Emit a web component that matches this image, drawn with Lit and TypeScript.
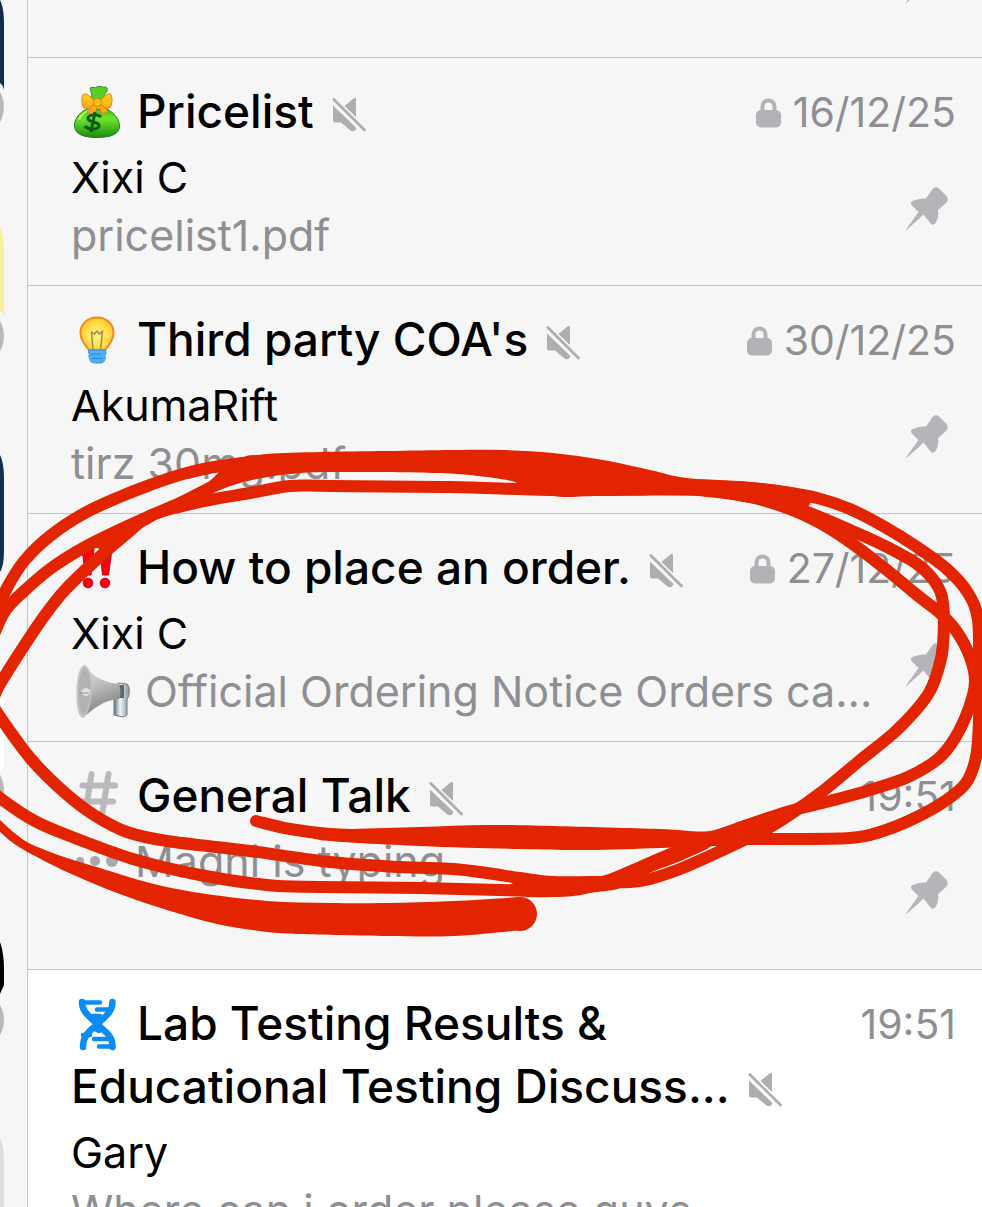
import { LitElement, html, svg, css, nothing, TemplateResult, SVGTemplateResult } from "lit";
import { customElement, property } from "lit/decorators.js";

type Pt = [number, number];

/** Smooth curve through a list of points (Catmull-Rom turned into cubic Béziers). A point given twice makes a corner. */
function curve(pts: Pt[], closed = false): string {
  const n = pts.length;
  const at = (i: number): Pt => (closed ? pts[(i + n) % n] : pts[Math.max(0, Math.min(n - 1, i))]);
  let d = `M${pts[0][0]} ${pts[0][1]}`;
  const last = closed ? n : n - 1;
  for (let i = 0; i < last; i++) {
    const [a, b, c, e] = [at(i - 1), at(i), at(i + 1), at(i + 2)];
    const r = (v: number) => Math.round(v * 10) / 10;
    d += `C${r(b[0] + (c[0] - a[0]) / 6)} ${r(b[1] + (c[1] - a[1]) / 6)} ${r(c[0] - (e[0] - b[0]) / 6)} ${r(c[1] - (e[1] - b[1]) / 6)} ${c[0]} ${c[1]}`;
  }
  return closed ? d + "Z" : d;
}

/* Marker strokes of even width, as centre lines. */
const STROKES: Pt[][] = [
  // outer, left and over the top
  [[-4, 612], [8, 586], [25, 560], [50, 536], [83, 514], [117, 498], [150, 485], [183, 474], [220, 466], [260, 461]],
  // middle, left
  [[-6, 634], [5, 611], [22, 593], [50, 569], [83, 548], [117, 531], [150, 516], [180, 503], [210, 488], [250, 470]],
  // inner, left, and the lower strand along the top
  [[-6, 697], [0, 684], [24, 646], [45, 615], [65, 590], [95, 561], [125, 535], [152, 515], [200, 502], [250, 493], [290, 486], [330, 486], [450, 487], [560, 490], [660, 489], [705, 490]],
  // outer, right, down and back to the left
  [[687, 485], [750, 488], [783, 492], [817, 498], [850, 509], [883, 526], [917, 547], [948, 570], [968, 593], [978, 620], [979, 670], [979, 720], [976, 757], [966, 783], [945, 801], [917, 817], [883, 831], [850, 838], [773, 839], [700, 839]],
  // middle, right, all round to the left edge
  [[700, 488], [750, 495], [790, 506], [820, 517], [850, 530], [883, 545], [917, 564], [935, 582], [943, 603], [943, 645], [938, 670], [927, 696], [897, 730], [858, 762], [823, 791], [790, 814], [748, 838], [712, 855], [680, 869], [650, 879], [630, 882], [590, 882], [553, 882], [520, 878], [487, 873], [453, 869], [400, 867], [330, 862], [250, 851], [167, 841], [127, 832], [94, 815], [64, 792], [31, 759], [0, 717], [-8, 703]],
  // the strand that crosses over, right, and the lower round
  [[700, 490], [750, 497], [790, 509], [820, 523], [850, 542], [883, 567], [917, 595], [940, 613], [957, 632], [970, 657], [975, 682], [969, 708], [955, 738], [938, 759], [908, 777], [870, 790], [830, 801], [790, 811], [745, 826], [700, 842], [650, 863], [610, 881], [580, 889], [553, 891], [500, 890], [420, 888], [320, 887], [267, 885], [200, 875], [133, 859], [67, 835], [33, 820], [0, 798], [-8, 790]],
  // start of the middle bar
  [[256, 821], [290, 829], [330, 834], [400, 836]],
];

/* Parts of the marker where the line swells, as outlines. */
const SWELLS: Pt[][] = [
  [[212, 479], [212, 479], [235, 460], [267, 454], [320, 452], [387, 451], [453, 450], [503, 450], [553, 453], [603, 460], [650, 470], [687, 478], [750, 482], [804, 490], [810, 504], [810, 504], [798, 512], [750, 503], [703, 496], [600, 496], [553, 496], [512, 481], [512, 481], [487, 477], [437, 473], [330, 472], [290, 474], [262, 478], [240, 483], [214, 492], [195, 500], [180, 504], [180, 504]],
  [[320, 832], [353, 829], [420, 827], [487, 825], [553, 826], [660, 829], [710, 831], [750, 818], [797, 805], [826, 795], [800, 815], [772, 833], [748, 845], [714, 846], [660, 848], [587, 850], [520, 849], [420, 846], [320, 840]],
  [[85, 546], [110, 534], [150, 512], [175, 500], [157, 519], [133, 533], [112, 552], [95, 564], [84, 566], [100, 550]],
  [[665, 850], [685, 844], [712, 845], [683, 860], [647, 874], [620, 888], [597, 892], [553, 897], [520, 896], [500, 889], [500, 889], [520, 881], [553, 878], [597, 877], [630, 865]],
  [[-6, 814], [0, 820], [17, 835], [33, 845], [67, 858], [100, 868], [150, 883], [200, 893], [267, 901], [330, 903], [387, 903], [453, 901], [520, 897], [520, 897], [520, 897], [522, 930], [522, 930], [522, 930], [453, 936], [387, 936], [300, 934], [267, 932], [217, 924], [167, 910], [117, 893], [67, 872], [33, 855], [13, 843], [0, 832], [-6, 826]],
];

const glyph = (body: SVGTemplateResult) =>
  html`<svg class="glyph" viewBox="0 0 54 54" aria-hidden="true">${body}</svg>`;

const moneyBag = glyph(svg`
  <defs>
    <linearGradient id="bag" x1="0" y1="0" x2="0" y2="1">
      <stop offset="0" stop-color="#3fc41b"/><stop offset=".35" stop-color="#6fe32c"/>
      <stop offset="1" stop-color="#1c8a12"/>
    </linearGradient>
    <linearGradient id="bow" x1="0" y1="0" x2="0" y2="1">
      <stop offset="0" stop-color="#ffd21f"/><stop offset="1" stop-color="#ff9a12"/>
    </linearGradient>
  </defs>
  <path d="M19 14C22 10 20 6 19 2C22 0 24 3 26 1C29 -1 31 2 34 1C36 1 37 3 36 5C34 8 32 10 33 14Z" fill="#58cf25" stroke="#239b17" stroke-width="1"/>
  <path d="M16 23C7 27 3 35 3.500 40C4 48 12 51.500 26 51.500C40 51.500 48.500 48 48.500 40C48.500 33 43 27 36 23Z" fill="url(#bag)" stroke="#1b8313" stroke-width="1"/>
  <path d="M8 33C11 28 15 25 19 24" stroke="#aef55e" stroke-width="2" fill="none" stroke-linecap="round"/>
  <path d="M25 17C19 9 13 6 12 9C10 13 11 20 13 22C16 23 21 20 25 17Z M28 17C33 9 39 6 40 9C42 13 41 20 38 22C35 23 31 20 28 17Z M24 17L16 26C17 28 21 28 23 29L27 19L31 28C33 27 36 27 37 25L29 17Z" fill="url(#bow)" stroke="#f0780f" stroke-width="1" stroke-linejoin="round"/>
  <circle cx="26.500" cy="16.500" r="4" fill="#ffc51c" stroke="#f0780f" stroke-width="1"/>
  <path d="M30 31C27 28 18 28 17 32C16 37 29 35 28 40C27 44 17 44 14 40M24 26L20 46" fill="none" stroke="#0b5b16" stroke-width="3"/>
`);

const bulb = glyph(svg`
  <defs>
    <radialGradient id="glass" cx=".5" cy=".55" r=".55">
      <stop offset="0" stop-color="#fff78a"/><stop offset=".6" stop-color="#ffe04a"/><stop offset="1" stop-color="#ffc62e"/>
    </radialGradient>
  </defs>
  <path d="M26 3.500C16 3.500 9.500 10.500 9.500 19C9.500 27 15 32 18 36H34C37 32 42.500 27 42.500 19C42.500 10.500 36 3.500 26 3.500Z" fill="url(#glass)" stroke="#f28a1d" stroke-width="2"/>
  <path d="M22 36L20.500 18L23.500 20L26 17L28.500 20L31.500 17L29.500 36" fill="none" stroke="#a08a50" stroke-width="1.500" stroke-linejoin="round"/>
  <path d="M18 36C17 37 17 39 18.500 40C17.500 42 18 44 19 45C19 48 21 49 25 49H29C32 49 33 48 33.500 46C34.500 45 34.500 43 33.500 42C35.500 40 35 38 34.500 36Z" fill="#4fb0f5" stroke="#3291e6" stroke-width="1"/>
  <path d="M20 40H29M21 44.500H31" stroke="#2a83d6" stroke-width="1.200" stroke-linecap="round"/>
`);

const bangs = glyph(svg`
  <g fill="#fb0012" stroke="#c80014" stroke-width="1">
    <path d="M11 7Q17 4 23 7L20 33H14.500Z"/><path d="M29 7Q35 4 41 7L37.500 33H31.500Z"/>
    <circle cx="17" cy="41" r="4.800"/><circle cx="34" cy="41" r="4.800"/>
  </g>
`);

const hash = glyph(svg`
  <path d="M20.500 4L14.500 42M37.500 4L31.500 42M11.500 15.500H44M10.500 31.500H42" fill="none" stroke="#b9b9bb" stroke-width="6" stroke-linecap="round"/>
`);

const dna = glyph(svg`
  <g fill="none" stroke="#0a8cf5" stroke-linecap="round" stroke-linejoin="round">
    <path d="M11 4C11 15 20 19 26 26C33 33 42 37 41.500 49M41.500 4C41.500 15 33 19 26.500 26C19 33 12 37 12 49" stroke-width="6.500"/>
    <path d="M12 4.500H29M26 11.500H37M22 18H29L26 24M24 31L28 33M19 37H12M23 41H37M28 48.500H41" stroke-width="4.500"/>
  </g>
`);

const megaphone = glyph(svg`
  <defs>
    <linearGradient id="horn" x1="0" y1="0" x2=".3" y2="1">
      <stop offset="0" stop-color="#e4e4e4"/><stop offset=".5" stop-color="#b9b9ba"/><stop offset="1" stop-color="#7d7d7f"/>
    </linearGradient>
    <linearGradient id="grip" x1="0" y1="0" x2="1" y2="0">
      <stop offset="0" stop-color="#5c7078"/><stop offset=".4" stop-color="#eef4f6"/><stop offset="1" stop-color="#7f9199"/>
    </linearGradient>
  </defs>
  <path d="M47 18L56 19C59 21 59 31 56 34V50L52 52L43 50V35Z" fill="url(#grip)" stroke="#6d7d84" stroke-width="1"/>
  <path d="M48 20H53V33H48Z" fill="#59666d"/>
  <path d="M14 1C20 8 28 17 48 19C50 24 50 30 48 34C33 35 23 43 12 53Z" fill="url(#horn)"/>
  <path d="M14 0C20 4 22 14 21 26C20 40 16 52 12 53C7 52 5 40 5.500 26C6 12 9 0 14 0Z" fill="#c4c4c6"/>
  <path d="M13.500 2C18 6 20 14 19.500 26C19 40 15 49 12 50C9 46 7 38 7.500 26C8 14 10 4 13.500 2Z" fill="#b2b2b4"/>
  <ellipse cx="15" cy="27" rx="4.500" ry="4" fill="#dedede"/><path d="M8 28H18" stroke="#929294" stroke-width="1"/>
`);

const mute = html`<svg class="mute" viewBox="0 0 34 35" role="img" aria-label="Muted">
  <g fill="#aeaeb0"><path d="M21.500 1.500Q24 -.5 24 2.500V20L12.500 9Z"/><path d="M1 8.500L24.500 31Q22.500 36 18.500 33.500L9 25.500H3Q1 25.500 1 23Z"/></g>
  <path d="M1.800 2.500L32.500 33" stroke="#aeaeb0" stroke-width="2.800" stroke-linecap="round"/>
</svg>`;

const lock = html`<svg class="lock" viewBox="0 0 25 30" role="img" aria-label="Closed topic">
  <rect y="12" width="25" height="17.500" rx="5" fill="#b3b2b7"/>
  <path d="M6.500 14V8.500a6 6 0 0 1 12 0V14" fill="none" stroke="#b3b2b7" stroke-width="4"/>
</svg>`;

const pin = html`<svg class="pin" viewBox="0 0 44 44" role="img" aria-label="Pinned">
  <path fill="#b5b4b9" d="M28 1.500Q31 -1 34 1.500L41.500 9Q44 12 41.500 15.500L33 23Q34 31 30.500 36Q28.500 39 26 37L18.500 27.500Q11 35 0 44Q7 34 13.500 25L7 18.500Q4.500 16 7.500 14Q14 11 21 11.500Z"/>
</svg>`;

interface Topic {
  icon: TemplateResult;
  title: string;
  date: string;
  closed?: boolean;
  pinned?: boolean;
  sender?: string;
  text?: string;
  textIcon?: TemplateResult;
  typing?: string;
}

const TOPICS: Topic[] = [
  { icon: moneyBag, title: "Pricelist", date: "16/12/25", closed: true, pinned: true, sender: "Xixi C", text: "pricelist1.pdf" },
  { icon: bulb, title: "Third party COA's", date: "30/12/25", closed: true, pinned: true, sender: "AkumaRift", text: "tirz 30mg.pdf" },
  { icon: bangs, title: "How to place an order.", date: "27/12/25", closed: true, pinned: true, sender: "Xixi C", text: "Official Ordering Notice Orders ca...", textIcon: megaphone },
  { icon: hash, title: "General Talk", date: "19:51", pinned: true, typing: "Magni is typing" },
  { icon: dna, title: "Lab Testing Results & Educational Testing Discuss...", date: "19:51", sender: "Gary", text: "Where can i order please guys" },
];

@customElement("topic-row")
export class TopicRow extends LitElement {
  @property({ attribute: false }) topic!: Topic;

  static styles = css`
    :host { display: block; }
    .row {
      display: block;
      box-sizing: border-box;
      min-height: 228px;
      padding: 22px 26px 0 43px;
      border-bottom: 1px solid #c3c3c6;
      background: #f6f6f7;
      color: #000;
      text-decoration: none;
    }
    .open { background: #fff; }
    .head, .body { display: flex; justify-content: space-between; align-items: flex-start; }
    .body { margin-top: 5px; }
    .title { margin: 0; font-size: 46px; line-height: 63px; font-weight: 500; }
    .line { margin: 0; font-size: 43px; line-height: 58px; white-space: nowrap; }
    .muted { color: #8e8e93; }
    .meta {
      display: flex; align-items: center; gap: 12px;
      font-size: 41px; line-height: 65px; color: #8e8e93; white-space: nowrap;
    }
    .head { height: auto; }
    .glyph { width: 54px; height: 54px; margin-right: 12px; vertical-align: -12px; overflow: visible; }
    .line .glyph { margin-right: 20px; }
    .mute { width: 34px; height: 35px; margin-left: 18px; vertical-align: -4px; }
    .lock { width: 25px; height: 30px; }
    .pin { flex: none; width: 44px; height: 44px; margin: 39px 7px 0 0; }
    .body { margin-top: 3px; }
    .open .body { margin-top: 5px; }
    .typing { display: flex; align-items: center; gap: 16px; }
    .dots { width: 44px; height: 12px; margin-left: 4px; }
    .tail { white-space: nowrap; }
  `;

  render() {
    const t = this.topic;
    const cut = t.title.lastIndexOf(" ") + 1;
    return html`<a class="row ${t.pinned ? "" : "open"}" href="#">
      <div class="head">
        <h2 class="title">${t.icon}${t.title.slice(0, cut)}<span class="tail">${t.title.slice(cut)}${mute}</span></h2>
        <div class="meta">${t.closed ? lock : nothing}<time>${t.date}</time></div>
      </div>
      <div class="body">
        <div>
          ${t.sender ? html`<p class="line">${t.sender}</p>` : nothing}
          ${t.text ? html`<p class="line muted">${t.textIcon ?? nothing}${t.text}</p>` : nothing}
          ${t.typing
            ? html`<p class="line muted typing"><svg class="dots" viewBox="0 0 44 12" aria-hidden="true"><g fill="#a9a9ad"><circle cx="5" cy="6" r="4"/><circle cx="20" cy="6" r="5"/><circle cx="37" cy="6" r="6"/></g></svg>${t.typing}</p>`
            : nothing}
        </div>
        ${t.pinned ? pin : nothing}
      </div>
    </a>`;
  }
}

@customElement("app-root")
export class AppRoot extends LitElement {
  static styles = css`
    :host {
      display: flex;
      position: relative;
      height: 100vh;
      overflow: hidden;
      background: #f6f6f7;
      font-family: Inter, "Liberation Sans", sans-serif;
    }
    .rail { flex: none; width: 27px; border-right: 1px solid #c3c3c6; }
    .topics { flex: 1; min-width: 0; }
    .previous {
      display: flex; justify-content: flex-end; align-items: flex-end;
      box-sizing: border-box; height: 58px; padding: 0 33px 53px 0;
      border-bottom: 1px solid #c3c3c6;
    }
    .pin { flex: none; width: 44px; height: 44px; }
    .marker { position: absolute; top: 0; left: 0; width: 100%; pointer-events: none; }
  `;

  render() {
    return html`
      <aside class="rail">
        <svg width="27" height="1207" viewBox="0 0 27 1207" aria-hidden="true">
          <path d="M0 0C3 6 4 14 4 24V90Q3 85 0 83Z" fill="#13294d"/>
          <path d="M0 228C3 234 4 242 4 252V315Q2 312 0 311Z" fill="#f7ef9c"/>
          <path d="M0 455C3 461 4 470 4 480V550C4 560 3 567 0 572Z" fill="#10304f"/>
          <path d="M0 684H4V766L0 772Z" fill="#fff"/>
          <path d="M0 942C3 950 4 960 4 969V985L0 994Z" fill="#000"/>
          <path d="M0 1138C3 1144 4 1152 4 1162V1207H0Z" fill="#dedede"/>
          <g fill="#b8b8ba"><circle cx="-26" cy="107" r="30"/><circle cx="-26" cy="336" r="30"/><circle cx="-26" cy="790" r="30"/><circle cx="-26" cy="1020" r="30"/></g>
        </svg>
      </aside>
      <main class="topics">
        <div class="previous">${pin}</div>
        ${TOPICS.map((t) => html`<topic-row .topic=${t}></topic-row>`)}
      </main>
      <svg class="marker" viewBox="0 0 982 1207" aria-hidden="true">
        <g fill="none" stroke="#e32400" stroke-width="12" stroke-linecap="round" stroke-linejoin="round">
          ${STROKES.map((s) => svg`<path d=${curve(s)} />`)}
        </g>
        <g fill="#e32400">
          ${SWELLS.map((s) => svg`<path d=${curve(s, true)} />`)}
          <circle cx="520" cy="914" r="17"/>
        </g>
      </svg>
    `;
  }
}
